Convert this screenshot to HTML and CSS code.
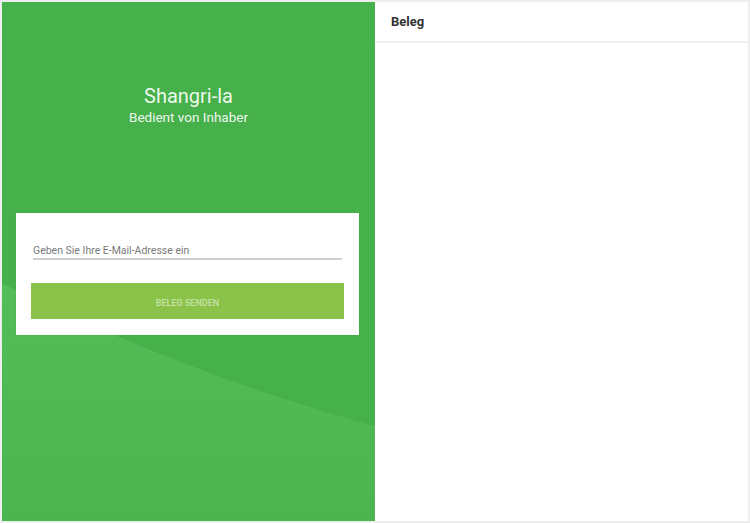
FILE: index.html
```html
<!DOCTYPE html>
<html lang="de">
<head>
  <meta charset="UTF-8" />
  <meta name="viewport" content="width=device-width, initial-scale=1.0"/>
  <title>Beleg</title>
  <link rel="stylesheet" href="styles.css">
</head>
<body>

  <div class="screen">

    <!-- Left: shop + form -->
    <div class="shop-panel">
      <h1 class="shop-name">Shangri-la</h1>
      <p class="shop-staff">Bedient von Inhaber</p>

      <form class="receipt-card" onsubmit="return false;">
        <input type="email" class="email-input" placeholder="Geben Sie Ihre E-Mail-Adresse ein">
        <button class="send-btn">BELEG SENDEN</button>
      </form>
    </div>

    <!-- Right: receipt -->
    <div class="receipt-panel">
      <div class="receipt-header">Beleg</div>
      <div class="receipt-body"></div>
    </div>

  </div>

</body>
</html>
```

FILE: styles.css
```css
* {
  box-sizing: border-box;
  margin: 0;
  padding: 0;
}

body {
  font-family: Roboto, 'Liberation Sans', sans-serif;
  background: #eeeeee;
  padding: 2px;
}

.screen {
  display: flex;
  height: 519px;
}

/* Left panel */
.shop-panel {
  width: 373px;
  padding-top: 82px;
  text-align: center;
  background:
    radial-gradient(circle 2108px at 938px -1606px, #46b14a 2107px, transparent 2108px),
    linear-gradient(#5dc661, #4cb550);
}

.shop-name {
  font-size: 20px;
  line-height: 24px;
  font-weight: 400;
  color: rgba(255, 255, 255, 0.93);
}

.shop-staff {
  margin-top: 1px;
  font-size: 13.5px;
  line-height: 16px;
  color: rgba(255, 255, 255, 0.93);
}

.receipt-card {
  margin: 88px 16px 0 14px;
  height: 122px;
  background: #fff;
  padding: 24px 15px 0;
  text-align: left;
  box-shadow: 0 0 1px rgba(0, 0, 0, 0.15);
}

.email-input {
  display: block;
  width: calc(100% - 4px);
  margin: 0 2px;
  height: 23px;
  padding-top: 5px;
  border: none;
  border-bottom: 2px solid #cfcfcf;
  font-family: Roboto, 'Liberation Sans', sans-serif;
  font-size: 10.5px;
  color: #333;
  outline: none;
  background: transparent;
}

.email-input::placeholder {
  color: #7a7a7a;
}

.send-btn {
  display: block;
  width: 100%;
  height: 36px;
  margin-top: 23px;
  padding-top: 3px;
  border: none;
  background: #8bc34a;
  color: #c5e1a5;
  font-family: Roboto, 'Liberation Sans', sans-serif;
  font-size: 9px;
  font-weight: 500;
  cursor: pointer;
}

/* Right panel */
.receipt-panel {
  width: 373px;
  display: flex;
  flex-direction: column;
  background: #fff;
}

.receipt-header {
  height: 41px;
  padding-left: 16px;
  line-height: 39px;
  font-size: 13px;
  font-weight: 700;
  color: #333;
  border-bottom: 2px solid #f0f0f0;
}

.receipt-body {
  flex: 1;
}
```
